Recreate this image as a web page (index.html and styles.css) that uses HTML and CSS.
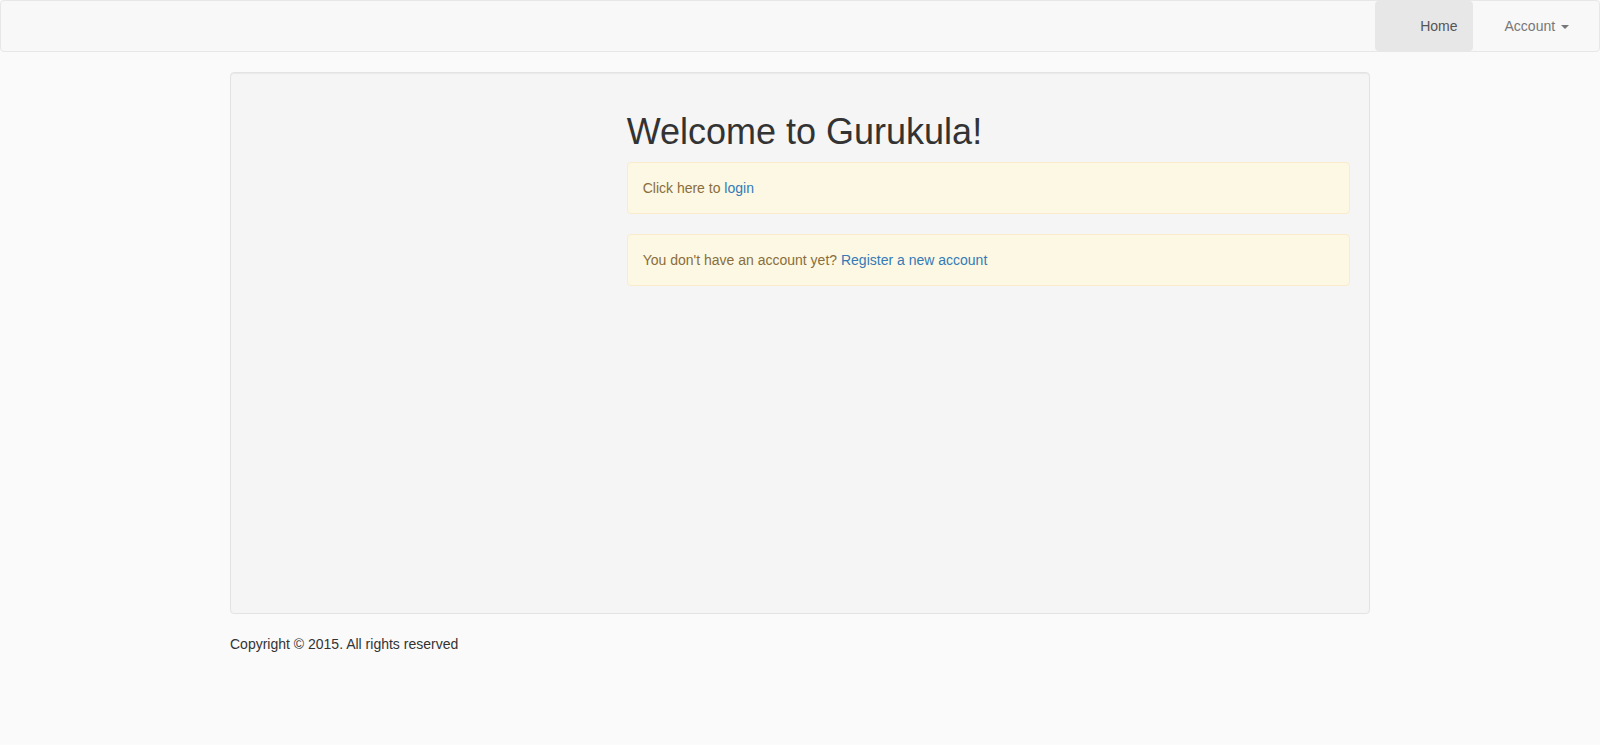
FILE: index.html
```html
<!DOCTYPE html>
<html lang="en">
<head>
<meta charset="utf-8">
<title>Gurukula</title>
<link rel="stylesheet" href="styles.css">
</head>
<body>
<nav class="navbar">
  <ul class="nav">
    <li><a class="nav-link active home" href="#">Home</a></li>
    <li><a class="nav-link account" href="#">Account <span class="caret"></span></a></li>
  </ul>
</nav>
<div class="container">
  <div class="well">
    <div class="row">
      <div class="col-side"></div>
      <div class="col-main">
        <h1>Welcome to Gurukula!</h1>
        <div class="alert">Click here to <a href="#">login</a></div>
        <div class="alert">You don't have an account yet? <a href="#">Register a new account</a></div>
      </div>
    </div>
  </div>
  <div class="footer">Copyright © 2015. All rights reserved</div>
</div>
</body>
</html>
```
FILE: styles.css
```css
* { box-sizing: border-box; }
html, body { margin: 0; padding: 0; }
body {
  font-family: "Liberation Sans", Arial, sans-serif;
  font-size: 14px;
  line-height: 20px;
  color: #333;
  background: #fafafa;
}
a { color: #337ab7; text-decoration: none; }

.navbar {
  height: 52px;
  background: #f8f8f8;
  border: 1px solid #e7e7e7;
  border-radius: 4px;
  margin-bottom: 20px;
  display: flex;
  justify-content: flex-end;
  padding-right: 15px;
}
.nav {
  list-style: none;
  margin: 0;
  padding: 0;
  display: flex;
}
.nav-link {
  display: block;
  height: 50px;
  padding: 15px 15px;
  color: #777;
  line-height: 20px;
}
.nav-link.home { padding-left: 45px; }
.nav-link.account { padding-left: 32px; }
.nav-link.active {
  background: #e7e7e7;
  color: #555;
  border-radius: 4px;
}
.caret {
  display: inline-block;
  width: 0;
  height: 0;
  margin-left: 2px;
  vertical-align: middle;
  border-top: 4px solid;
  border-left: 4px solid transparent;
  border-right: 4px solid transparent;
}

.container {
  width: 1170px;
  margin: 0 auto;
  padding: 0 15px;
}
.well {
  min-height: 542px;
  padding: 19px;
  background: #f5f5f5;
  border: 1px solid #e3e3e3;
  border-radius: 4px;
  box-shadow: inset 0 1px 1px rgba(0,0,0,.05);
  margin-bottom: 20px;
}
.row {
  display: flex;
  margin: 0 -15px;
}
.col-side { width: 33.3333%; padding: 0 15px; }
.col-main { width: 66.6667%; padding: 0 15px; }
h1 {
  font-size: 36px;
  font-weight: 500;
  line-height: 1.1;
  margin: 20px 0 10px;
  color: #333;
}
.alert {
  padding: 15px;
  margin-bottom: 20px;
  border: 1px solid #faebcc;
  border-radius: 4px;
  background: #fcf8e3;
  color: #8a6d3b;
}
.footer {
  line-height: 20px;
}
```
